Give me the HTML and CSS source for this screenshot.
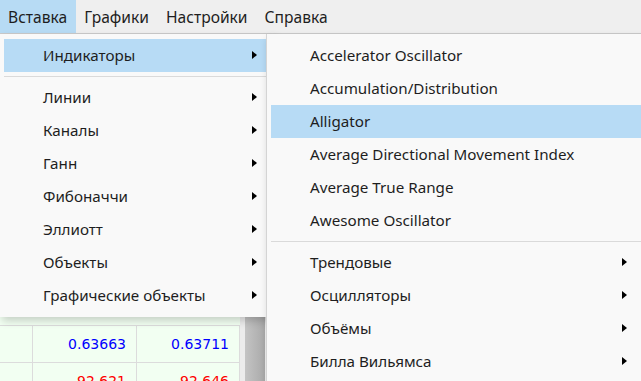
FILE: index.html
```html
<!DOCTYPE html>
<html lang="ru">
<head>
    <meta charset="UTF-8">
    <title>Вставка</title>
    <link rel="stylesheet" href="styles.css">
</head>
<body>
    <div class="menubar">
        <div class="menubar-item active">Вставка</div>
        <div class="menubar-item">Графики</div>
        <div class="menubar-item">Настройки</div>
        <div class="menubar-item">Справка</div>
    </div>

    <div class="workspace">
        <div class="quotes">
            <div class="row"><div class="cell c1"></div><div class="cell c2 blue">0.63663</div><div class="cell c3 blue">0.63711</div></div>
            <div class="row"><div class="cell c1"></div><div class="cell c2 red">92.621</div><div class="cell c3 red">92.646</div></div>
            <div class="row"><div class="cell c1"></div><div class="cell c2 blue">1.08412</div><div class="cell c3 blue">1.08430</div></div>
        </div>
        <div class="gutter"></div>
        <div class="scrollbar"></div>

        <!-- Insert menu -->
        <div class="dropdown main-menu">
            <div class="menu-item selected has-sub">Индикаторы</div>
            <div class="separator"></div>
            <div class="menu-item has-sub">Линии</div>
            <div class="menu-item has-sub">Каналы</div>
            <div class="menu-item has-sub">Ганн</div>
            <div class="menu-item has-sub">Фибоначчи</div>
            <div class="menu-item has-sub">Эллиотт</div>
            <div class="menu-item has-sub">Объекты</div>
            <div class="menu-item has-sub">Графические объекты</div>
        </div>

        <!-- Indicators submenu -->
        <div class="dropdown sub-menu">
            <div class="menu-item">Accelerator Oscillator</div>
            <div class="menu-item">Accumulation/Distribution</div>
            <div class="menu-item selected">Alligator</div>
            <div class="menu-item">Average Directional Movement Index</div>
            <div class="menu-item">Average True Range</div>
            <div class="menu-item">Awesome Oscillator</div>
            <div class="separator"></div>
            <div class="menu-item has-sub">Трендовые</div>
            <div class="menu-item has-sub">Осцилляторы</div>
            <div class="menu-item has-sub">Объёмы</div>
            <div class="menu-item has-sub">Билла Вильямса</div>
        </div>
    </div>
</body>
</html>
```

FILE: styles.css
```css
body {
    margin: 0;
    padding: 0;
    font-family: "Noto Sans", sans-serif;
    font-size: 15.2px;
    color: #1e1e1e;
    background-color: #f0f0f0;
    overflow: hidden;
}

.menubar {
    display: flex;
    height: 33px;
    background-color: #efefef;
    border-bottom: 1px solid #cacaca;
    font-size: 15.6px;
}

.menubar-item {
    display: flex;
    align-items: center;
    padding: 0 9px 0 8px;
}

.menubar-item.active {
    background-color: #b7dbf4;
}

.workspace {
    position: relative;
    display: flex;
    height: 347px;
}

/* quotes table under the menus */
.quotes {
    width: 240px;
    background-color: #f2fff2;
    display: flex;
    flex-direction: column;
    justify-content: flex-end;
    margin-bottom: -55px;
    font-family: "DejaVu Sans", sans-serif;
    font-size: 14px;
}

.row {
    display: flex;
    height: 36px;
    border-top: 1px solid #dcdcdc;
}

.cell {
    display: flex;
    align-items: center;
    justify-content: flex-end;
    padding-right: 10px;
    border-right: 1px solid #dcdcdc;
}

.c1 { width: 32px; padding-right: 0; }
.c2 { width: 93px; }
.c3 { width: 92px; }

.blue { color: #0000ff; }
.red { color: #ff0000; }

.gutter {
    width: 5px;
    background-color: #ececec;
}

.scrollbar {
    width: 20px;
    background: linear-gradient(to right, #c4c4c4, #a9a9a9);
}

/* dropdown menus */
.dropdown {
    position: absolute;
    top: 0;
    background-color: #f9f9f9;
    padding: 5px 4px;
    box-shadow: 2px 4px 8px rgba(0, 0, 0, 0.18);
}

.main-menu {
    left: 0;
    width: 267px;
}

.sub-menu {
    left: 266px;
    width: 380px;
    border-left: 1px solid #d4d4d4;
}

.menu-item {
    position: relative;
    height: 33px;
    line-height: 33px;
    padding-left: 39px;
    white-space: nowrap;
}

.menu-item.selected {
    background-color: #b7dbf5;
}

.has-sub::after {
    content: "";
    position: absolute;
    top: 12px;
    border-left: 5px solid #000;
    border-top: 4.5px solid transparent;
    border-bottom: 4.5px solid transparent;
}

.main-menu .has-sub::after {
    right: 14px;
}

.sub-menu .has-sub::after {
    right: 24px;
}

.separator {
    height: 9px;
    position: relative;
}

.separator::before {
    content: "";
    position: absolute;
    left: 0;
    right: 0;
    top: 4px;
    border-top: 1px solid #dadada;
}
```
